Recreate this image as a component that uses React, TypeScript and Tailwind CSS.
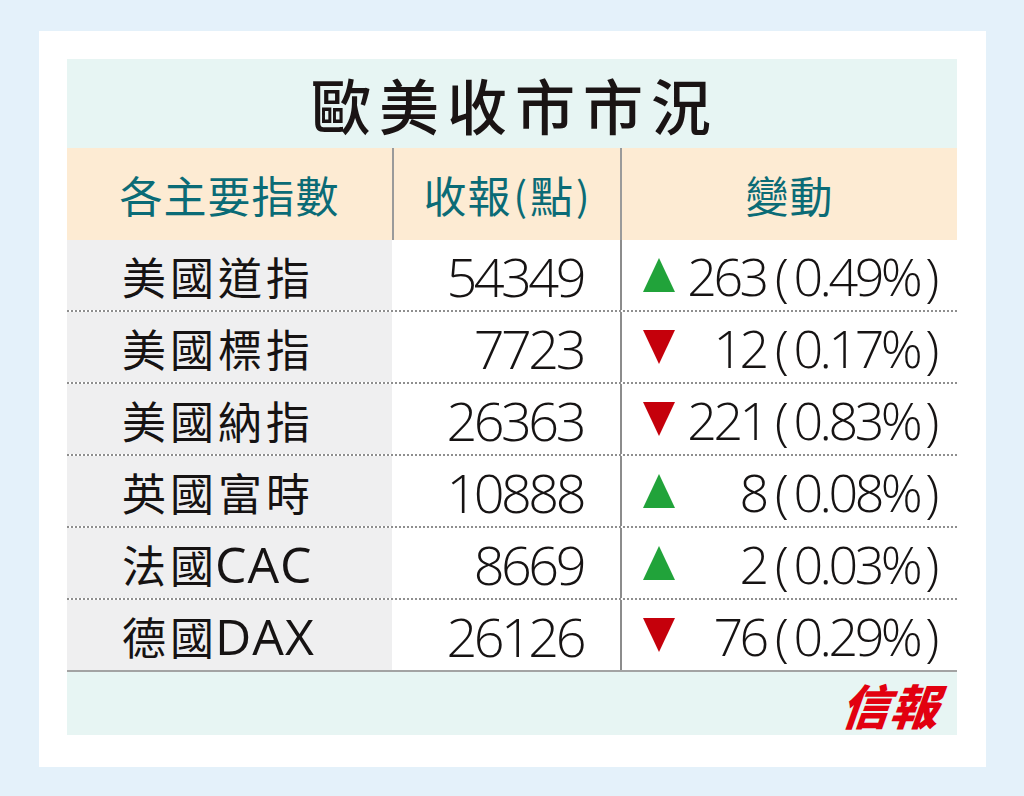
import * as React from 'react';

type Row = {
  name: string;
  latin?: string;
  close: string;
  dir: 'up' | 'down';
  chg: string;
  pct: string;
};

const rows: Row[] = [
  { name: '美國道指', close: '54349', dir: 'up', chg: '263', pct: '0.49%' },
  { name: '美國標指', close: '7723', dir: 'down', chg: '12', pct: '0.17%' },
  { name: '美國納指', close: '26363', dir: 'down', chg: '221', pct: '0.83%' },
  { name: '英國富時', close: '10888', dir: 'up', chg: '8', pct: '0.08%' },
  { name: '法國', latin: 'CAC', close: '8669', dir: 'up', chg: '2', pct: '0.03%' },
  { name: '德國', latin: 'DAX', close: '26126', dir: 'down', chg: '76', pct: '0.29%' },
];

const cjk = "font-['Noto_Sans_CJK_TC','Noto_Sans_CJK_SC',sans-serif]";
const num = "font-['Open_Sans','Noto_Sans_CJK_TC',sans-serif]";

const Triangle = ({ dir }: { dir: 'up' | 'down' }) =>
  dir === 'up' ? (
    <svg width="34" height="36" viewBox="0 0 34 36" className="shrink-0">
      <polygon points="17,1 33,35 1,35" fill="#21a33a" />
    </svg>
  ) : (
    <svg width="34" height="36" viewBox="0 0 34 36" className="shrink-0">
      <polygon points="1,1 33,1 17,35" fill="#c5000b" />
    </svg>
  );

export default function App() {
  return (
    <div className="w-[1024px] h-[796px] bg-[#e4f1fa] pt-[31px] pl-[39px]">
      <div className="w-[947px] h-[736px] bg-white pt-[28px] pl-[28px]">
        <div className="w-[890px]">
          {/* Title */}
          <div className="h-[89px] bg-[#e7f5f3] flex items-center justify-center">
            <span
              className={cn(cjk, 'text-[60px] leading-none font-medium text-[#1a1414] tracking-[8px] pl-[6px]')}
            >
              歐美收市市況
            </span>
          </div>

          {/* Header */}
          <div className="grid grid-cols-[325px_228px_337px] h-[92px] bg-[#fdebd3] text-[#0b6b76]">
            <div className={cn(cjk, 'flex items-center justify-center text-[43px] tracking-[1px]')}>各主要指數</div>
            <div
              className={cn(
                cjk,
                'flex items-center justify-center text-[43px] tracking-[1px] border-l-2 border-[#9a9a9a] whitespace-nowrap',
              )}
            >
              收報<span className="text-[40px] mx-[2px]">(</span>點<span className="text-[40px] ml-[2px]">)</span>
            </div>
            <div
              className={cn(cjk, 'flex items-center justify-center text-[43px] tracking-[1px] border-l-2 border-[#9a9a9a]')}
            >
              變動
            </div>
          </div>

          {/* Body */}
          <div>
            {rows.map((r, i) => (
              <div
                key={r.name + i}
                className={cn(
                  'grid grid-cols-[325px_228px_337px] h-[72px] text-[#161313] overflow-hidden',
                  i < rows.length - 1 ? 'border-b-2 border-dotted border-[#8f8f8f]' : 'border-b-2 border-solid border-[#a3a3a3]',
                )}
              >
                <div className="bg-[#efeff0] flex items-center pl-[55px] pt-[2px] whitespace-nowrap">
                  <span className={cn(cjk, 'text-[44px] leading-none tracking-[4px]')}>{r.name}</span>
                  {r.latin && (
                    <span className={cn(num, 'text-[50px] leading-none font-normal tracking-[1px] -ml-[3px]')}>
                      {r.latin}
                    </span>
                  )}
                </div>
                <div className="flex items-center justify-end pr-[37px] pt-[2px]">
                  <span className={cn(num, 'text-[54px] leading-none font-light tracking-[-3.5px]')}>{r.close}</span>
                </div>
                <div className="flex items-center justify-between pl-[20px] pr-[21px] border-l-2 border-[#8c8c8c]">
                  <Triangle dir={r.dir} />
                  <span
                    className={cn(num, 'text-[52px] leading-none font-light tracking-[-3.5px] pt-[2px] whitespace-nowrap')}
                  >
                    {r.chg}
                    <span className="inline-block ml-[9px] mr-[8px] font-extralight">(</span>
                    {r.pct}
                    <span className="inline-block ml-[6px] font-extralight">)</span>
                  </span>
                </div>
              </div>
            ))}
          </div>

          {/* Footer */}
          <div className="h-[63px] bg-[#e7f5f3] flex items-center justify-end pr-[17px]">
            <span
              className={cn(
                cjk,
                'text-[48px] leading-none font-black text-[#e2000f] tracking-[1px] italic -skew-x-6',
              )}
            >
              信報
            </span>
          </div>
        </div>
      </div>
    </div>
  );
}

function cn(...parts: (string | false | undefined)[]) {
  return parts.filter(Boolean).join(' ');
}
